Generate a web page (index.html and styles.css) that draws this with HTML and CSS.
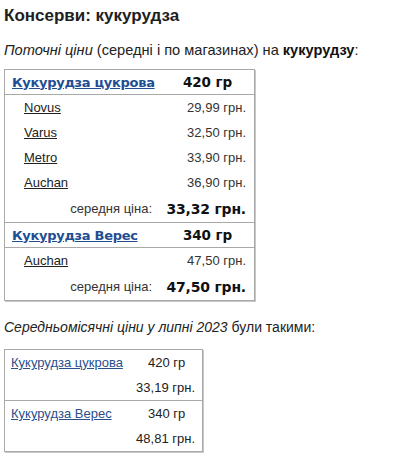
FILE: index.html
```html
<!DOCTYPE html>
<html lang="uk">
<head>
<meta charset="utf-8">
<link rel="stylesheet" href="styles.css">
</head>
<body>
<h1 class="title">Консерви: кукурудза</h1>
<p class="lead"><i>Поточні ціни</i> (середні і по магазинах) на <b>кукурудзу</b>:</p>
<table class="prices">
  <tr class="head"><td class="name"><a href="#">Кукурудза цукрова</a></td><td class="weight">420 гр</td></tr>
  <tr class="first"><td class="store"><a href="#">Novus</a></td><td class="price">29,99 грн.</td></tr>
  <tr><td class="store"><a href="#">Varus</a></td><td class="price">32,50 грн.</td></tr>
  <tr><td class="store"><a href="#">Metro</a></td><td class="price">33,90 грн.</td></tr>
  <tr><td class="store"><a href="#">Auchan</a></td><td class="price">36,90 грн.</td></tr>
  <tr class="avg"><td class="avg-label">середня ціна:</td><td class="avg-price">33,32 грн.</td></tr>
  <tr class="head"><td class="name"><a href="#">Кукурудза Верес</a></td><td class="weight">340 гр</td></tr>
  <tr class="first"><td class="store"><a href="#">Auchan</a></td><td class="price">47,50 грн.</td></tr>
  <tr class="avg"><td class="avg-label">середня ціна:</td><td class="avg-price">47,50 грн.</td></tr>
</table>
<p class="lead2"><i>Середньомісячні ціни у липні 2023</i> були такими:</p>
<table class="monthly">
  <tr><td class="m-name"><a href="#">Кукурудза цукрова</a></td><td class="m-weight">420 гр</td></tr>
  <tr class="m-price-row"><td></td><td class="m-price">33,19 грн.</td></tr>
  <tr class="m-sep"><td class="m-name"><a href="#">Кукурудза Верес</a></td><td class="m-weight">340 гр</td></tr>
  <tr class="m-price-row"><td></td><td class="m-price">48,81 грн.</td></tr>
</table>
</body>
</html>
```
FILE: styles.css
```css
html, body {
  margin: 0;
  padding: 0;
  background: #fff;
}
body {
  padding: 3px 4px;
  font-family: "Liberation Sans", Arial, sans-serif;
  color: #222;
}
.title {
  margin: 0;
  font-size: 17px;
  font-weight: bold;
  line-height: 26px;
  color: #1e1e1e;
}
.lead {
  margin: 11px 0 0;
  font-size: 14.6px;
  line-height: 20px;
  color: #222;
}
.lead b { color: #111; }
.prices {
  margin-top: 9px;
  width: 251px;
  border-collapse: collapse;
  border: 1px solid #a9a9a9;
  box-shadow: 1px 1px 0 #c8c8c8;
}
.prices td {
  padding: 0;
  height: 25px;
  font-size: 13px;
}
.prices .avg td { height: 27px; }
.prices .head td {
  border-top: 1px solid #a9a9a9;
  border-bottom: 1px solid #a9a9a9;
  height: 24px;
}
.name {
  padding-left: 7px !important;
  font-family: "DejaVu Sans", Verdana, sans-serif;
  font-weight: bold;
  font-size: 13px !important;
  letter-spacing: -0.3px;
}
.name a { color: #1f4e93; }
.weight {
  font-family: "DejaVu Sans", Verdana, sans-serif;
  font-weight: bold;
  font-size: 13.5px !important;
  color: #111;
  text-align: center;
  letter-spacing: -0.1px;
}
.store { padding-left: 19px !important; }
.store a { color: #222; }
.price {
  text-align: right;
  padding-right: 8px !important;
  color: #333;
}
.avg-label {
  text-align: right;
  padding-right: 9px !important;
  color: #333;
}
.avg-price {
  width: 85px;
  text-align: right;
  padding-right: 8px !important;
  font-family: "DejaVu Sans", Verdana, sans-serif;
  font-weight: bold;
  font-size: 14px !important;
  letter-spacing: -0.2px;
  color: #111;
}
.lead2 {
  margin: 16px 0 0;
  font-size: 14px;
  line-height: 20px;
  color: #222;
}
.monthly {
  margin-top: 12px;
  width: 199px;
  border-collapse: collapse;
  border: 1px solid #a9a9a9;
  box-shadow: 1px 1px 0 #c8c8c8;
}
.monthly td {
  padding: 0;
  height: 25px;
  font-size: 13px;
}
.m-name { padding-left: 6px !important; }
.m-name a { color: #2a4f8c; }
.m-weight { text-align: center; color: #222; }
.m-price { text-align: right; padding-right: 7px !important; color: #222; }
.m-sep td { border-top: 1px solid #a9a9a9; }
```
